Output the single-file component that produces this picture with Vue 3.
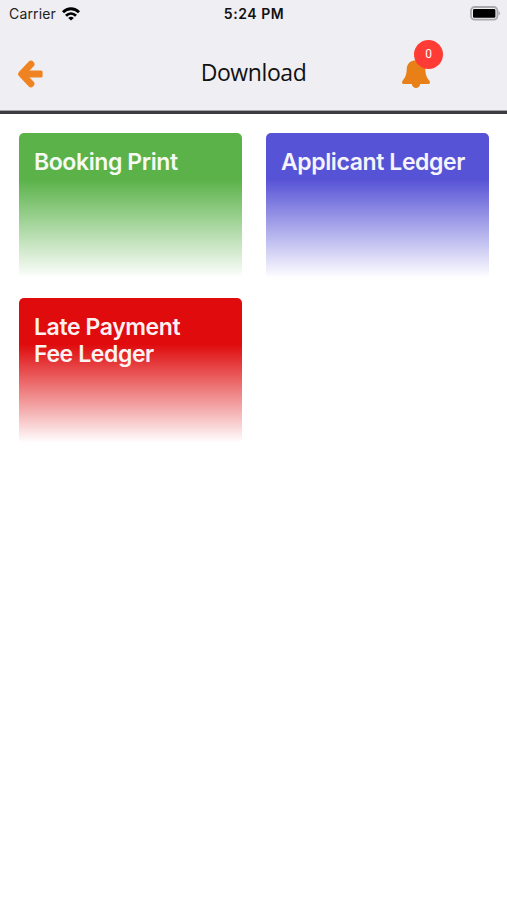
<template>
  <div class="screen">
    <header class="header">
      <div class="status-bar">
        <div class="carrier">
          <span class="carrier-name">Carrier</span>
          <svg class="wifi" width="18" height="14" viewBox="0 0 18 14" fill="none" stroke="#000" stroke-width="2.8">
            <path d="M1 5.2 C5.5 0.6 12.5 0.6 17 5.2" />
            <path d="M4 8.8 C7 5.8 11 5.8 14 8.8" />
            <path d="M9 13.6 L6.2 10.9 Q9 8.6 11.8 10.9 Z" fill="#000" stroke="none" />
          </svg>
        </div>
        <span class="time">5:24 PM</span>
        <svg class="battery" width="31" height="15" viewBox="0 0 31 15">
          <rect x="1" y="1" width="26.4" height="12.6" rx="3.6" fill="#efeef3" stroke="#a9a9ac" stroke-width="1.8" />
          <rect x="3" y="3" width="22.4" height="8.8" rx="1.4" fill="#000" />
          <path d="M28.5 4.8 Q31.4 7.2 28.5 9.8 Z" fill="#a9a9ac" />
        </svg>
      </div>

      <div class="nav-bar">
        <button class="back">
          <svg width="26" height="28" viewBox="0 0 26 28">
            <path d="M14 4.2 L4.6 14 L14 23.8" fill="none" stroke="#f08321" stroke-width="6.8" stroke-linecap="round" stroke-linejoin="round" />
            <rect x="4" y="10.6" width="21.6" height="6.8" rx="1.5" fill="#f08321" />
          </svg>
        </button>
        <h1 class="title">Download</h1>
        <button class="bell">
          <svg width="28" height="29" viewBox="0 0 28 29" fill="#e88017">
            <path d="M14 0.2 C8 0.2 4.9 4 4.7 9.5 C4.5 14.5 3.6 17.2 0.8 20.4 Q-1 23.2 1.4 24 H9.8 C10.6 29.4 17.4 29.4 18.2 24 H26.6 Q29 23.2 27.2 20.4 C24.4 17.2 23.5 14.5 23.3 9.5 C23.1 4 20 0.2 14 0.2 Z" />
          </svg>
          <span class="badge">{{ notifications }}</span>
        </button>
      </div>
    </header>

    <main class="cards">
      <div v-for="card in cards" :key="card.title" class="card" :class="card.color">
        <h2>{{ card.title }}</h2>
      </div>
    </main>
  </div>
</template>

<script setup>
import { ref } from 'vue'

const notifications = ref(0)

const cards = ref([
  { title: 'Booking Print', color: 'green' },
  { title: 'Applicant Ledger', color: 'blue' },
  { title: 'Late Payment Fee Ledger', color: 'red' }
])
</script>

<style>
body {
  margin: 0;
  background: #fff;
}
</style>

<style scoped>
.screen {
  min-height: 900px;
  background: #fff;
  font-family: Inter, "Liberation Sans", sans-serif;
}

.header {
  box-sizing: border-box;
  height: 114px;
  background: #efeef3;
  border-bottom: 3px solid #3e3c42;
  box-shadow: inset 0 -1px 0 #a5a4a9;
}

.status-bar {
  display: grid;
  grid-template-columns: 1fr auto 1fr;
  align-items: center;
  height: 27px;
  padding: 0 6px 0 7px;
}

.carrier {
  display: flex;
  align-items: center;
  gap: 6px;
  padding-left: 2px;
}

.carrier-name {
  font-size: 14px;
  letter-spacing: 0.15px;
  color: #222;
}

.time {
  font-size: 14px;
  font-weight: 600;
  letter-spacing: 0.55px;
  color: #111;
}

.battery {
  justify-self: end;
}

.nav-bar {
  display: grid;
  grid-template-columns: 1fr auto 1fr;
  align-items: center;
  height: 84px;
  padding: 0 17px;
}

button {
  padding: 0;
  border: none;
  background: none;
}

svg {
  display: block;
}

.back {
  justify-self: start;
  margin-top: 9px;
}

.title {
  margin: 5px 0 0;
  font-family: "Open Sans", "Noto Sans", sans-serif;
  font-size: 23px;
  font-weight: 400;
  letter-spacing: -0.4px;
  color: #111;
}

.bell {
  position: relative;
  justify-self: end;
  margin: 11px 60px 0 0;
}

.badge {
  position: absolute;
  top: -20px;
  left: 12px;
  width: 29px;
  height: 29px;
  border-radius: 50%;
  background: #ff3b36;
  color: #fff;
  font-family: Roboto, sans-serif;
  font-size: 12px;
  line-height: 29px;
  text-align: center;
}

.cards {
  display: grid;
  grid-template-columns: 1fr 1fr;
  gap: 20px 24px;
  padding: 19px 18px 0 19px;
}

.card {
  box-sizing: border-box;
  height: 145px;
  padding: 15.5px 40px 0 15px;
  border-radius: 5px;
}

.card h2 {
  margin: 0;
  font-size: 23px;
  font-weight: 600;
  line-height: 27.5px;
  letter-spacing: -0.4px;
  color: #fff;
  opacity: 0.94;
}

.green {
  background: linear-gradient(#5ab249 32%, #fff 100%);
}

.blue {
  padding-right: 0;
  background: linear-gradient(#5753d6 32%, #fff 100%);
}

.red {
  background: linear-gradient(#df0b0d 32%, #fff 100%);
}
</style>
